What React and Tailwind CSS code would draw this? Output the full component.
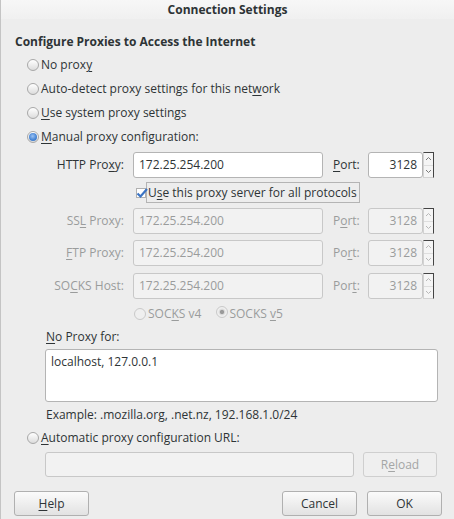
import React from 'react'

const FONT = { fontFamily: '"Open Sans", "DejaVu Sans", sans-serif' }

// underlined mnemonic letter
const U = ({ children }) => <span className="underline underline-offset-2 decoration-1">{children}</span>

const Radio = ({ checked, disabled }) => (
    <span
        className={`inline-block w-[12px] h-[12px] rounded-full border shrink-0 relative ${disabled
            ? 'border-[#c9c9c9] bg-[#efefef]'
            : 'border-[#a8a8a8] bg-gradient-to-b from-[#ffffff] to-[#dcdcdc]'
            }`}
    >
        {checked && (
            <span
                className={`absolute inset-[1px] rounded-full ${disabled
                    ? 'bg-[radial-gradient(circle,#9a9a9a_30%,#d8d8d8_45%,#efefef_70%)]'
                    : 'bg-[radial-gradient(circle_at_45%_40%,#9cc3f2_0%,#4a87d6_55%,#2f6bbd_100%)]'
                    }`}
            />
        )}
    </span>
)

const Chevron = ({ up, color }) => (
    <svg viewBox="0 0 7 5" className="w-[7px] h-[5px]">
        <path d={up ? 'M1 4 L3.5 1.5 L6 4' : 'M1 1 L3.5 3.5 L6 1'} fill="none" stroke={color} strokeWidth="1" />
    </svg>
)

const Spin = ({ disabled }) => {
    const c = disabled ? '#b8b8b8' : '#7a7a7a'
    return (
        <div className="w-[11px] h-[26px] flex flex-col border border-[#d2d2d2] border-r-[#444] border-t-[#444] bg-[#f5f5f5]">
            <div className="flex-1 flex items-center justify-center border-b border-[#dedede]"><Chevron up color={c} /></div>
            <div className="flex-1 flex items-center justify-center"><Chevron color={c} /></div>
        </div>
    )
}

const ProxyRow = ({ label, value, port, disabled, className = '' }) => {
    const txt = disabled ? 'text-[#9a9c9c]' : 'text-[#2e3436]'
    const box = disabled ? 'bg-[#f2f2f2] border-[#c8c8c8]' : 'bg-white border-[#b4b4b4]'
    return (
        <div className={`flex items-center h-[26px] ${className}`}>
            <div className={`w-[108px] pr-[9px] text-right ${txt}`}>{label}</div>
            <div className={`w-[190px] h-[26px] border rounded-[3px] flex items-center px-[5px] ${box} ${txt}`}>{value}</div>
            <div className={`w-[45px] pl-[10px] ${txt}`}>{port}</div>
            <div className={`w-[55px] h-[26px] border rounded-[3px] flex items-center justify-end px-[5px] ${box} ${txt}`}>3128</div>
            <Spin disabled={disabled} />
        </div>
    )
}

const Button = ({ children, className = '' }) => (
    <button className={`h-[25px] w-[75px] rounded-[3px] border border-[#b0b0b0] bg-gradient-to-b from-[#fbfbfb] to-[#e2e2e2] text-[#2e3436] ${className}`}>
        {children}
    </button>
)

export default function App() {
    return (
        <div style={FONT} className="w-[454px] h-[519px] bg-[#ededed] border-l border-[#c4c4c4] text-[12px] text-[#2e3436] overflow-hidden">
            <div className="h-[19px] bg-gradient-to-b from-[#f7f7f7] to-[#f0f0f0] flex items-center justify-center font-bold">
                Connection Settings
            </div>

            <div className="pl-[14px] pr-[15px]">
                <div className="mt-[12px] h-[22px] flex items-center font-bold">Configure Proxies to Access the Internet</div>

                <div className="pl-[12px]">
                    <div className="h-[24px] flex items-center gap-[2px]"><Radio /><span>No prox<U>y</U></span></div>
                    <div className="h-[24px] flex items-center gap-[2px]"><Radio /><span>Auto-detect proxy settings for this net<U>w</U>ork</span></div>
                    <div className="h-[24px] flex items-center gap-[2px]"><Radio /><span><U>U</U>se system proxy settings</span></div>
                    <div className="h-[24px] flex items-center gap-[2px]"><Radio checked /><span><U>M</U>anual proxy configuration:</span></div>
                </div>

                <div className="pl-[10px]">
                    <ProxyRow className="mt-[3px]" label={<>HTTP Pro<U>x</U>y:</>} value="172.25.254.200" port={<><U>P</U>ort:</>} />

                    <div className="mt-[4px] h-[21px] flex items-center pl-[111px]">
                        <span className="w-[10px] h-[10px] border border-[#b0b0b0] bg-white relative">
                            <svg viewBox="0 0 12 12" className="absolute -left-[1px] -top-[2px] w-[12px] h-[12px]">
                                <path d="M1.5 6.5 L4.5 9.5 L11 2" fill="none" stroke="#3b74c4" strokeWidth="2.2" />
                            </svg>
                        </span>
                        <span className="h-[21px] border border-[#b4b4b4] flex items-center px-[1px] pr-[2px]">
                            U<U>s</U>e this proxy server for all protocols
                        </span>
                    </div>

                    <ProxyRow className="mt-[5px]" disabled label={<>SS<U>L</U> Proxy:</>} value="172.25.254.200" port={<>P<U>o</U>rt:</>} />
                    <ProxyRow className="mt-[6px]" disabled label={<><U>F</U>TP Proxy:</>} value="172.25.254.200" port={<>Po<U>r</U>t:</>} />
                    <ProxyRow className="mt-[7px]" disabled label={<>SO<U>C</U>KS Host:</>} value="172.25.254.200" port={<>Por<U>t</U>:</>} />

                    <div className="mt-[5px] h-[20px] flex items-center pl-[109px] text-[#9a9c9c]">
                        <Radio disabled />
                        <span className="ml-[2px]">SOC<U>K</U>S v4</span>
                        <span className="ml-[15px]"><Radio checked disabled /></span>
                        <span className="ml-[1px]">SOCKS <U>v</U>5</span>
                    </div>
                </div>

                <div className="pl-[30px]">
                    <div className="mt-[4px] h-[18px] flex items-center pl-[1px]"><span><U>N</U>o Proxy for:</span></div>
                    <div className="mt-[3px] h-[53px] w-[393px] bg-white border border-[#b4b4b4] rounded-[3px] px-[5px] pt-[3px]">
                        localhost, 127.0.0.1
                    </div>
                    <div className="mt-[4px] h-[18px] flex items-center pl-[1px]">Example: .mozilla.org, .net.nz, 192.168.1.0/24</div>
                </div>

                <div className="pl-[12px] mt-[4px] h-[20px] flex items-center gap-[2px]">
                    <Radio /><span><U>A</U>utomatic proxy configuration URL:</span>
                </div>

                <div className="pl-[30px] mt-[4px] flex items-center h-[25px]">
                    <div className="w-[309px] h-[25px] bg-[#f2f2f2] border border-[#c8c8c8] rounded-[3px]" />
                    <div className="ml-[9px] w-[74px] h-[25px] border border-[#cfcfcf] rounded-[3px] bg-[#efefef] flex items-center justify-center text-[#a4a6a6]">
                        <span>R<U>e</U>load</span>
                    </div>
                </div>

                <div className="mt-[14px] flex items-center">
                    <Button className="ml-[-1px]"><U>H</U>elp</Button>
                    <div className="flex-1" />
                    <Button className="mr-[10px]">Cancel</Button>
                    <Button className="mr-[-3px]">OK</Button>
                </div>
            </div>
        </div>
    )
}
